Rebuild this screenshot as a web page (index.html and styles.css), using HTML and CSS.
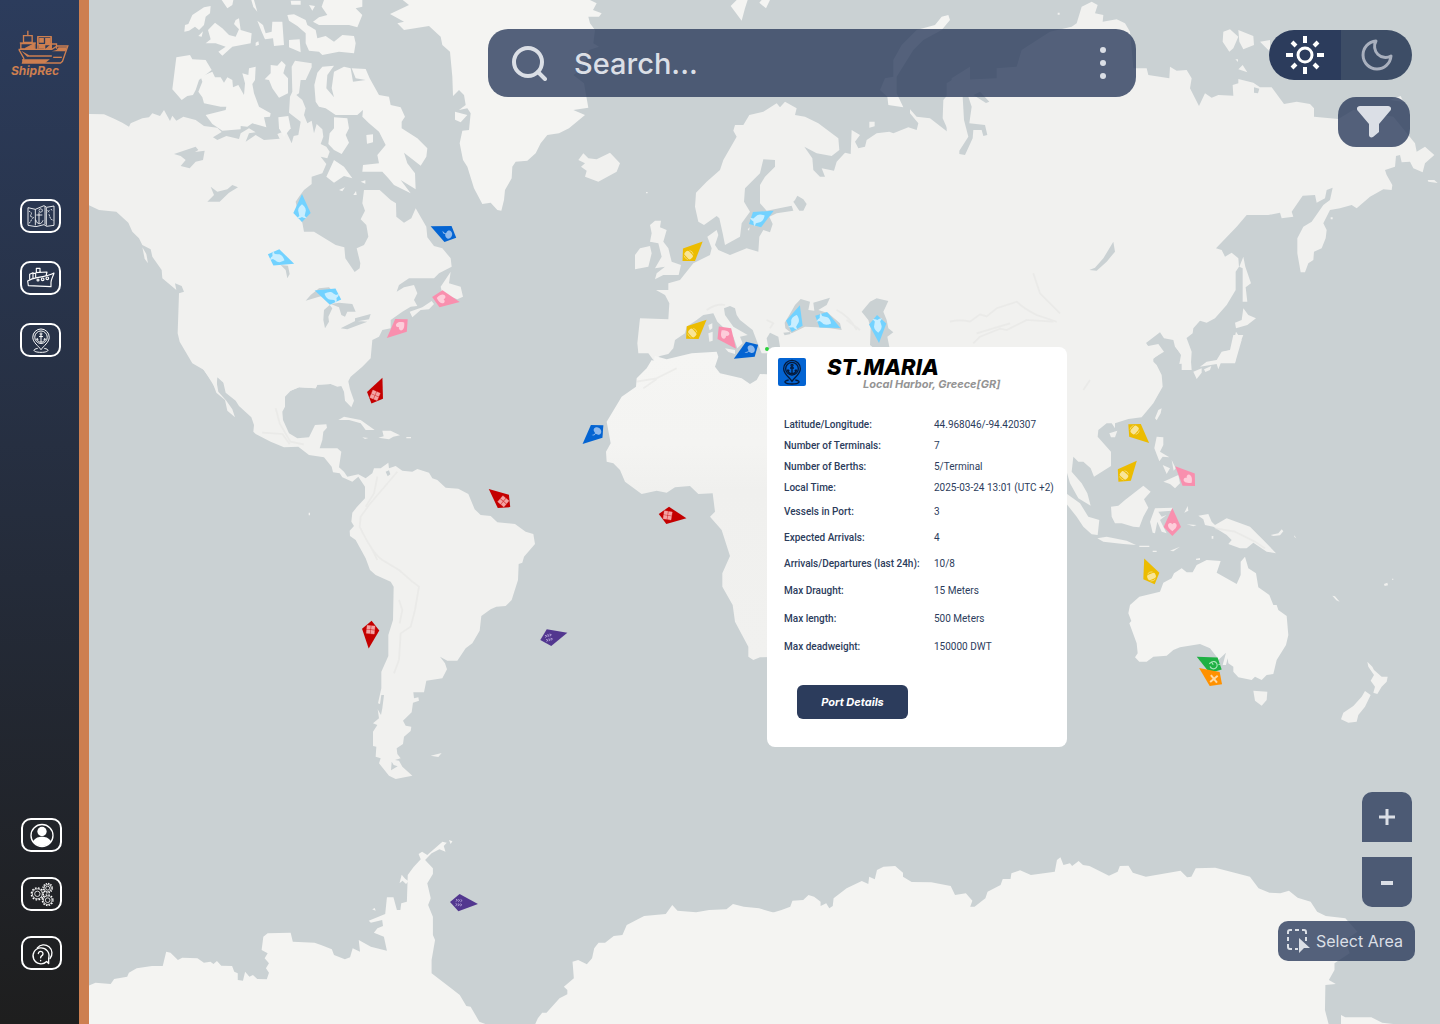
FILE: index.html
```html
<!DOCTYPE html>
<html lang="en">
<head>
<meta charset="utf-8">
<title>ShipRec</title>
<link rel="stylesheet" href="styles.css">
</head>
<body>
<div class="app">
  <aside class="sidebar">
    <a class="brand" href="#" aria-label="ShipRec home">
      <svg class="brand-ship" viewBox="0 0 150 102" fill="none" stroke="currentColor" stroke-width="4">
        <path d="M28 2v14"/><path d="M15 17h26v20H15z"/><path d="M4 39h48"/><path d="M7 41h42v16H7z"/>
        <path d="M58 20h40v24H58z"/><path d="M62 24h14v14H62zM80 24h16v20H80zM60 44h20v12H60z" fill="currentColor" stroke="none"/>
        <path d="M58 22v36M78 42v16M98 22v36M80 42h34v14"/>
        <path d="M84 56l14-12v14zM20 56l26-14v14z" fill="currentColor"/>
        <path d="M2 58h98l16-10h32l-16 46-6 5H12l4-14L2 60z"/>
        <path d="M10 88h84l-14 11H14zM8 62l24 14h68v4H26zM120 52h26l-5 12H100l14-4z" fill="currentColor" stroke="none"/>
        <path d="M104 82h26"/>
      </svg>
      <span class="brand-name">ShipRec</span>
    </a>
    <nav class="nav nav-main" aria-label="Main">
      <button class="nav-btn" type="button" aria-label="Map">
        <svg viewBox="0 0 84 66" class="i-wide" fill="none" stroke="currentColor" stroke-width="2.6">
          <path d="M3 8l22 5 26-11 8 5 22-4v58l-22 3-8-5-24 6-24-4z"/><path d="M25 13v48M54 4v54M58 8v54"/>
          <path d="M36 16a5 5 0 1 1 0 1M36 22v34M28 30h18M26 44c2 10 8 12 12 12s8-4 10-10" />
          <path d="M6 18l8 6-4 10 10 4M6 54c8-2 4-12 14-16M62 16l5 6M67 16l-5 6M66 28l5 14 8 4M72 12l4 6" stroke-dasharray="5 2"/>
        </svg>
      </button>
      <button class="nav-btn" type="button" aria-label="Vessels">
        <svg viewBox="0 0 84 66" class="i-wide" fill="none" stroke="currentColor" stroke-width="3.4" stroke-linejoin="round">
          <path d="M2 42c10-6 16-8 28-10 20-3 38-6 51-14-2 8-9 20-9 28v13L4 56z"/><path d="M8 38V22l10-5v17M18 19h8v13M26 17l34-2-3 12M28 16V4h11v11"/>
          <circle cx="33" cy="39" r="3"/><circle cx="47" cy="37" r="4"/><circle cx="61" cy="34" r="4"/>
        </svg>
      </button>
      <button class="nav-btn" type="button" aria-label="Ports">
        <svg viewBox="0 0 60 76" class="i-tall" fill="none" stroke="currentColor" stroke-width="3"><use href="#port"/></svg>
      </button>
    </nav>
    <nav class="nav nav-foot" aria-label="Account">
      <button class="nav-btn" type="button" aria-label="Profile">
        <svg viewBox="0 0 72 72" class="i-tall">
          <circle cx="36" cy="36" r="33" fill="none" stroke="currentColor" stroke-width="4"/><circle cx="36" cy="24" r="14" fill="currentColor"/>
          <path d="M9 54c8-12 17-14 27-14s19 2 27 14c-6 9-17 14-27 14S15 63 9 54z" fill="currentColor"/>
        </svg>
      </button>
      <button class="nav-btn" type="button" aria-label="Settings">
        <svg viewBox="0 0 72 72" class="i-tall" fill="none" stroke="currentColor" stroke-width="2.4">
          <circle cx="22" cy="34" r="15"/><circle cx="22" cy="34" r="18" stroke-dasharray="5 4.4" stroke-width="4"/><circle cx="22" cy="34" r="8"/>
          <circle cx="53" cy="17" r="11"/><circle cx="53" cy="17" r="14" stroke-dasharray="4 3.3" stroke-width="4"/><circle cx="53" cy="17" r="6"/>
          <circle cx="53" cy="53" r="13"/><circle cx="53" cy="53" r="16" stroke-dasharray="4.6 3.8" stroke-width="4"/><circle cx="53" cy="53" r="7"/>
        </svg>
      </button>
      <button class="nav-btn" type="button" aria-label="Help">
        <svg viewBox="0 0 72 72" class="i-tall" fill="none" stroke="currentColor" stroke-width="4" stroke-linecap="round" stroke-linejoin="round">
          <path d="M50 60a24 24 0 1 1 6-10v16z"/><path d="M22 19a20 20 0 1 1 38 32"/>
          <path d="M25 36a7 7 0 1 1 10 7c-3 2-3 3-3 6M32 57v1"/>
        </svg>
      </button>
    </nav>
  </aside>

  <main class="stage">
    <svg class="map" viewBox="267 0 4053 3072" preserveAspectRatio="xMidYMid slice" aria-label="World map">
      <defs>
        <linearGradient id="desert" x1="0" y1="0" x2="0" y2="1"><stop offset="0" stop-color="#f5f5f3"/><stop offset=".3" stop-color="#f4f4f2"/><stop offset=".45" stop-color="#f0f0ee"/><stop offset="1" stop-color="#f1f1ef"/></linearGradient>
        <g id="port">
          <path d="M30 66C22 54 5 44 5 28a25 25 0 0 1 50 0c0 16-17 26-25 38z"/><circle cx="30" cy="28" r="19"/>
          <circle cx="30" cy="18" r="3"/><path d="M30 21v22M24 26h12M18 33c1 7 6 10 12 10s11-3 12-10M15 36l3-4 4 3M38 35l4-3 3 4"/>
          <path d="M20 62c-18 3-14 12 10 12s28-9 10-12"/>
        </g>
        <path id="kite" d="M0-57L26 0 0 27-26 0z"/>
        <g id="fish"><use href="#kite" fill="#72d2ff"/><path d="M0-26c10 8 14 16 10 25L8 8l7 8-9-1-6-3-6 3-9 1 7-8-2-9c-4-9 0-17 10-25z" fill="#c9eeff"/></g>
        <g id="whale"><use href="#kite" fill="#0464d2"/><path d="M2-19c-6 3-8 7-5 11-8 3-11 8-10 13 2 9 18 11 23 2 4-7 0-13-7-13-4 0-7-3-1-13z" fill="#8fb9ec"/></g>
        <g id="heart"><use href="#kite" fill="#f98fae"/><path d="M0 13C-9 6-13 1-13-5c0-8 9-10 13-3 4-7 13-5 13 3 0 6-4 11-13 18z" fill="#fdcdda"/></g>
        <g id="cargo"><use href="#kite" fill="#c40000"/><path d="M-12-12h11v11h-11zM1-12h11V-1H1zM-12 1h11v11h-11zM1 1h11v11H1z" fill="#f3a3a3" stroke="#f3a3a3" stroke-width="1"/></g>
        <g id="barrel"><use href="#kite" fill="#ecbc00"/><rect x="-13" y="-7" width="26" height="17" rx="6" fill="#f9e596"/><path d="M-8-10q8-5 16 0M-8 13q8 4 16 0" fill="none" stroke="#f9e596" stroke-width="2"/></g>
        <g id="tug"><use href="#kite" fill="#52378f"/><path d="M-10-10l5 3-5 4M-3-10l5 3-5 4M4-10l5 3-5 4M-10 3l5 3-5 4M-3 3l5 3-5 4M4 3l5 3-5 4" transform="rotate(-90)" fill="none" stroke="#b9aadb" stroke-width="2.4"/></g>
      </defs>
      <g class="land">
        <!-- North America and the Arctic islands -->
        <g transform="translate(267 0)">
          <path d="M-5 342L45 343 77 357 100 368 120 380 125 370 160 355 180 352 190 340 213 348 225 330 243 363 250 347 262 362 283 350 320 360 345 378 385 383 398 396 372 412 385 420 412 408 450 417 455 400 480 385 500 397 480 400 470 425 500 405 525 420 572 416 565 402 590 392 608 430 614 408 628 405 635 365 600 338 603 290 610 275 608 200 618 182 668 190 668 202 650 240 635 240 630 280 622 285 640 300 650 325 645 345 655 370 668 362 675 400 683 372 700 388 703 410 695 432 712 440 722 455 715 475 695 470 712 492 700 520 668 530 668 552 645 570 630 590 620 605 630 650 640 668 645 695 675 695 740 735 766 742 769 775 797 816 812 805 814 790 803 745 825 735 838 710 832 675 815 658 828 632 820 610 825 570 872 570 905 600 921 610 922 650 945 668 967 655 980 625 1012 680 1015 712 1035 738 1060 745 1085 775 1088 800 1050 820 1035 835 960 835 930 855 923 875 945 862 975 855 985 880 975 900 985 918 965 920 940 935 905 960 905 985 880 990 870 1010 850 1020 845 1075 820 1100 785 1130 777 1145 765 1160 745 1155 725 1152 685 1154 680 1165 630 1162 605 1172 420 1160 400 1145 385 1132 382 1170 370 1150 345 1110 310 1090 272 1025 266 1000 270 880 285 875 278 858 258 850 262 870 220 835 218 810 190 770 185 748 160 735 150 715 130 695 118 668 82 635 30 630-5 613z"/>
          <path d="M160 742l12 20 5 28-10-14z"/>
          <g class="ice">
            <path d="M262 172L303 165 310 178 350 180 368 210 330 240 320 270 312 285 295 288 278 300 250 268z"/>
            <path d="M335 230L370 215 378 232 395 232 405 248 415 232 430 240 432 262 448 255 465 285 468 250 460 220 478 225 480 205 500 200 498 240 490 252 495 280 510 320 545 340 543 350 525 352 532 382 490 370 475 380 455 378 455 388 400 392 370 372 350 345 410 330 412 320 395 320 345 310 340 292 328 275 340 245z"/>
            <path d="M286 95L288 75 298 72 310 45 345 22 365 18 363 40 350 50 345 75 330 90 318 80 300 92zM328 108l14-14-4 16z"/>
            <path d="M357 90L378 68 400 85 420 105 440 110 450 88 435 72 440 60 450 55 455 90 488 100 485 130 430 140 400 167 388 155 410 140 380 130 350 130 365 118z"/>
            <path d="M505 62L522 75 530 100 548 95 550 65 580 65 585 135 555 138 552 115 528 118 518 95zM500 128l8-4 2 10-10 4z"/>
            <path d="M595 45L615 43 650 60 655 75 680 90 685 115 710 108 735 125 760 105 795 108 800 130 795 160 750 155 700 165 690 155 660 152 650 130 650 100 625 78 600 62z"/>
            <path d="M672 65L690 52 715 45 698 20 705 0H820L820 20 800 25 820 45 805 82 780 75 690 75z"/>
            <path d="M600 120L632 118 635 157 600 142zM398 0h35l-3 15-15 10zM487 0h8l10 35-12-14zM605 2h30v12h-28zM660 15l18 3-8 14z"/>
            <path d="M545 195L565 197 578 183 590 195 583 220 597 235 597 280 570 293 550 265 540 240 527 238 545 220z"/>
            <path d="M568 352L598 348 605 385 585 410 570 385z"/>
            <path d="M680 305L676 255 685 218 700 200 735 197 715 225 712 265 735 292 728 265 735 215 765 200 785 205 792 245 830 240 800 235 788 205 830 207 842 235 870 285 900 290 905 315 935 322 948 350 938 365 938 385 985 415 1015 445 1012 470 995 497 945 458 955 490 978 520 980 568 935 540 965 580 915 555 898 535 880 515 820 515 822 495 870 490 865 465 890 435 870 395 840 370 820 350 822 330 805 345 740 345 710 325 690 320z"/>
            <path d="M735 352L775 355 780 385 770 405 780 428 758 462 735 450 718 432 722 400 735 385zM832 405l20-2v24l-18 4z"/>
            <path d="M735 480L765 500 790 535 765 528 735 548 712 530zM750 570l18-8-8 12zM793 585l8-12 2 12zM815 545l14-4v10z"/>
          </g>
          <path d="M1085 815L1080 850 1115 860 1122 890 1105 898 1060 880 1055 860zM962 935L1000 922 1028 903 1035 912 1020 928 995 930 970 952z"/>
          <path class="ice" d="M1493-5L1523 10 1512 30 1538 40 1530 50 1498 50 1503 70 1518 90 1513 130 1530 140 1500 150 1483 205 1453 225 1485 250 1498 323 1453 330 1488 345 1440 385 1410 400 1375 405 1355 430 1340 460 1315 482 1280 485 1270 500 1268 535 1248 570 1245 600 1237 632 1225 630 1205 608 1180 612 1155 565 1135 500 1122 480 1112 430 1120 392 1140 390 1145 340 1135 325 1110 330 1130 315 1125 285 1110 270 1092 288 1090 230 1083 155 1060 135 1055 110 1020 78 945 90 925 70 945 65 903 42 960 15 935-5zM1098 335l37 10-20 22-17-8z"/>
        </g>
        <!-- Central and South America -->
        <g transform="translate(267 1140)">
          <path d="M340-35L370 5 382 38 408 60 415 92 438 112 430 88 412 62 388 35 380-10 400-5 410 38 440 62 450 78 487 112 495 135 493 155 500 162 545 185 585 202 628 200 660 225 705 232 728 260 732 277 752 280 760 292 790 305 808 290 828 320 828 355 803 382 790 398 787 425 795 438 782 452 783 468 800 480 830 535 843 570 860 585 905 605 914 620 912 720 898 765 898 828 877 875 877 925 867 970 873 972 877 945 885 945 880 985 876 1005 866 988 870 1015 852 1030 865 1035 852 1055 852 1098 862 1100 860 1130 875 1135 870 1150 882 1165 900 1187 920 1197 970 1187 940 1160 930 1142 918 1140 935 1135 925 1122 923 1105 942 1092 945 1070 965 1053 967 1040 950 1037 942 1022 968 997 972 968 990 962 988 952 975 955 973 937 1005 937 1012 902 1060 895 1074 868 1068 850 1053 830 1075 842 1105 842 1130 805 1150 790 1172 752 1177 708 1205 688 1222 680 1250 678 1268 660 1287 600 1289 552 1300 548 1305 530 1338 492 1333 462 1310 455 1278 432 1225 427 1205 408 1175 405 1157 388 1138 342 1108 326 1070 323 1045 300 1030 295 1020 278 985 267 970 275 940 272 920 258 900 265 898 248 875 265 855 265 850 280 830 295 808 283 775 290 765 275 750 262 757 215 745 205 692 205 700 180 703 155 714 143 712 133 678 135 660 172 625 175 600 160 582 120 580 95 588 80 588 50 605 32 630 22 680 25 685 14 725 12 745 20 757 18 765 35 768 62 787 82 795 62 783 28 777 0V-35z"/>
          <path d="M748 120L765 110 815 120 857 150 830 150 815 130 780 120zM880 152l25 0 28 14-20 4-13 8-32-5 16-4zM820 172l18 2-10 3zM952 171h14v4h-14zM1025 1127l33-8-10 12zM1305 1168l18 14zM659 398h4v8h-4z"/>
          <path class="water" d="M890 275l10-4 4 12-8 6zM908 1145l6 10 12 4-20 12z"/>
          <path class="relief" d="M560 85q8 30 12 45l32 55 40 8M520 158l60 4 22 30M925 275Q870 340 840 375L815 410 812 440Q850 520 880 540L930 570 970 605 990 620 978 690 965 740 935 760 930 840 915 880M865 290L855 340 830 380M930 660l10 30-8 40M845 500l20 40"/>
        </g>
        <!-- Europe, Scandinavia, western Russia -->
        <g transform="translate(1440 0)">
          <path d="M760 392L765 375 790 375 808 345 850 335 890 310 900 322 915 305 950 325 945 345 975 350 1015 370 1075 415 1078 450 1055 468 1010 460 973 440 997 475 1000 510 1020 530 1035 530 1025 505 1062 512 1070 485 1095 458 1112 462 1115 390 1140 405 1125 425 1135 445 1155 440 1160 420 1190 400 1228 395 1240 400 1285 382 1310 390 1315 370 1290 340 1290 328 1310 350 1350 355 1408 400 1388 355 1390 300 1415 270 1415 235 1470 200V1085H905L885 1060 900 1040 895 1010 870 998 860 1015 868 1060 845 1060 835 1035 818 990 780 960 770 945 765 925 750 918 732 925 735 945 760 980 803 1005 780 1010 788 1030 772 1045 760 1010 712 965 700 940 670 945 650 960 620 980 615 1000 585 1020 580 1045 565 1062 540 1068 520 1080 505 1060 475 1060 472 1030 480 955 565 958 568 910 555 885 528 870 565 870 565 850 600 840 640 790 690 765 695 745 682 710 710 690 715 705 705 735 715 750 750 765 800 745 835 755 838 710 850 690 870 697 878 672 868 650 890 640 940 632 935 617 860 632 840 610 840 555 855 530 885 500 885 480 850 478 840 520 795 565 792 605 810 635 785 670 780 710 735 735 728 700 718 655 710 648 672 675 655 665 645 620 648 578 680 545 720 510 730 480 770 410z"/>
          <path d="M295 480L310 460 325 475 350 478 390 458 420 490 410 515 355 545 315 530 320 512 303 500 315 490zM510 675L525 662 543 662 540 682 560 690 550 725 565 745 575 785 603 795 596 825 550 825 525 838 530 820 555 800 525 805 545 770 535 730 510 725 515 700zM480 745L510 738 515 760 505 800 465 808 465 765zM685 975l12-5v15l-8 6zM685 1000l13-5v27l-10 3zM735 1045l30 5v12l-20-6zM1168 365l16 0v14l-16 4zM498 576h5v4h-5zM803 688l6-6-2 10z"/>
          <path class="ice" d="M752 18L770 0H803L795 25 785 62 765 35zM838 8L845 0H870L858 25zM1405 45L1410 60 1385 90 1330 120 1300 150 1250 230 1250 280 1270 322 1225 315 1222 290 1200 270 1215 235 1240 230 1240 180 1265 135 1310 90 1365 75 1385 50z"/>
          <path class="water" d="M945 600L952 587 970 598 980 612 970 632 958 632 940 605zM962 897L945 915 928 945 914 968 916 985 935 1000 975 980 1010 982 1050 985 1085 990 1080 970 1045 940 1015 930 1040 915 1050 893 1000 908 1003 932 985 930 990 905zM1145 935L1170 905 1190 895 1225 903 1210 935 1220 960 1225 985 1240 997 1222 1010 1230 1050 1195 1055 1170 1035 1172 985 1165 960zM910 998l20-2 2 6-18 4zM1422 452h20v9z"/>
          <path class="relief" d="M680 930q30-20 55-15M860 960l20 10-10 15M1070 930q40 20 60 60M1100 960l40 30"/>
        </g>
        <!-- Siberia and the far east -->
        <g transform="translate(2880 0)">
          <path d="M-40 250L-20 238-5 250 0 240 110 235V205L170 200 185 150 270 95 335 80 350 70 365 20 395 5 413 15 405 40 430 45 428 65 470 58 495 70 510 95 520 205 560 205 565 225 628 235 630 200 650 212 680 210 695 235 690 265 717 318 735 280 755 293 775 285 820 287 818 255 835 250 835 237 880 248 900 262 935 262 972 312 1010 305 1050 312 1062 325 1062 350 1135 357 1180 330 1300 350 1365 430 1370 455 1395 440 1423 465 1395 490 1388 517 1360 505 1350 485 1325 487 1320 465 1308 468 1305 500 1275 510 1280 525 1297 555 1295 570 1270 568 1230 590 1190 625 1175 615 1140 625 1110 630 1090 670 1100 690 1097 715 1085 745 1062 755 1060 780 1045 790 1035 817 1022 817 1012 760 1012 715 1030 680 1055 665 1090 615 1110 600 1118 563 1100 570 1095 595 1070 608 1065 585 1028 587 995 635 1000 650 965 655 960 638 925 645 860 645 830 680 768 745 785 750 795 770 815 758 835 775 837 800 827 815 827 870 800 915 765 955 740 968 720 962 700 985 698 1000 675 1018 690 1045 695 1110H665V1065L645 1040 640 1020 612 1015 600 997 557 1030 565 1038 595 1032 612 1055 580 1075V1130H-40z"/>
          <path d="M790 95L810 88 835 110 820 145 808 155 788 125zM835 90L880 108 882 135 850 148 838 125zM900 125L930 120V155L915 140zM826 178h8v8zM835 208L848 195 862 217zM1290 300L1322 288 1330 305zM1403 540l20 0 10 9-28-4zM850 770L856 800 873 850 857 862 862 905 848 905 848 805 838 800zM850 925L865 945 888 955 862 975 828 985 825 968 845 960zM828 995L845 1020 825 1090H775L790 1055 815 1050zM1112 652h6v6h-6zM293 38h6v6h-6z"/>
          <path class="water" d="M8 290H25L35 320 28 370 75 375 82 405 70 408 65 390 40 390 38 415 15 465-2 462V452L25 410 12 360zM40 285l20-10 28 30-10 4zM460 725L465 755 440 785 410 812 388 810 405 803 430 775zM882 262l16 4-4 14-12-2z"/>
          <path class="relief" d="M-30 965q30-8 60 0l30-22 20 6 30-24 60-20q20 20 60 40l60 20M40 1030l20-20 60-24 20 4 60-30 80 5M220 820l20 60 60 60M50 1000l100-30M310 1015l70 30"/>
        </g>
        <!-- Africa -->
        <g transform="translate(1680 900)">
          <path fill="url(#desert)" d="M280 182L285 168 320 178 395 160 470 155 475 170 465 200 480 220 545 235 570 252 590 240 600 222 660 225V1070L600 1072 580 1080 565 1070 565 1040 525 965 518 915 487 860 487 820 510 768 485 690 450 650 465 635 458 580 415 582 390 558 345 562 320 578 290 572 245 582 195 545 180 510 160 490 140 485 138 455 152 430 140 365 185 290 228 260 230 235 260 205 275 180z"/>
          <path class="relief" d="M230 245l60-10 60-30M250 265l40-28"/>
        </g>
        <!-- China, south-east Asia, Oceania -->
        <g transform="translate(3000 1020)">
          <path d="M150-30H460L437 5 445 25 490 33 455 60 470 75 485 105 488 140 460 190 425 232 385 237 345 250 345 265 335 250 320 250 295 270 293 290 333 335 333 378 282 410 272 385 250 365 235 365 220 350 215 395 245 430 262 460 272 497 235 475 210 430 200 395H150zM523-20L530 25 543 45 538 72 573 68 575 35 560-5z"/>
          <path d="M700-15L690 30 665 35 650 60 620 65 600 80 650 72 655 88 665 62 705 68 712 30 730-15zM580 95L605 85V98L590 117zM612 88l22-10-4 12-14 6zM465 235L475 210 485 205 482 220 470 241zM328 280L352 272 345 292 333 292z"/>
          <path d="M470 290L490 292V315L480 335 508 352 488 350 478 364 463 325zM488 375L510 385 500 402zM490 425L535 405 540 430 525 445 510 432zM515 360L527 385 521 392zM333 500L355 497 375 480 430 437 452 455 432 478 445 503 430 530 418 562 400 560 365 550 345 550 335 530zM198 460L240 490 265 530 298 540 293 585 275 583 250 560 230 530 198 490zM292 595L320 590 380 602 408 615 370 612 310 605zM465 505L518 503 515 512 475 515 485 530 500 525 480 540 500 580 485 575 472 545 465 580 458 578 450 545zM418 617h30v4h-30zM458 632h12v4h-12zM510 632l30-12-20 14zM553 518l10-20 2 14zM560 553l30 2-10 4zM635 588h5v8h-5z"/>
          <path d="M595 527L625 522 635 545 645 555 680 535 750 560 795 605 828 640 800 635 760 608 740 625 720 625 685 612 695 600 680 585 640 560 615 555 610 538zM812 585L835 580 845 568 850 574 840 586 820 588zM997 767l8 2 14 16-10-4zM1152 732l10-4 2 8-10 2zM1176 716h4v3h-4zM883 586l6 9-6-4zM588 656l12-2v6h-12z"/>
          <path class="ice" d="M385 820L390 795 418 770 480 755 490 728 515 715 522 700 545 685 560 697 578 697 590 675 620 660 662 663 650 698 710 732 722 705 722 665 735 650 745 685 768 700 775 742 808 765 820 795 830 795 835 810 860 828 865 885 858 915 830 960 820 1002 800 1005 785 1020 765 1010 755 1020 715 1012 700 995 700 980 685 970 683 955 678 975 668 975 678 938 655 960 650 950 630 925 600 912 540 922 520 930 500 947 460 950 440 965 418 965 405 952 413 940 410 910 388 850 394 843z"/>
          <path d="M760 1052L802 1055 800 1080 785 1097 765 1082zM1102 965L1117 980 1122 990 1145 1010 1163 1010 1160 1025 1145 1040 1132 1062 1120 1058 1125 1040 1112 1022 1122 1005 1105 980zM1095 1053L1112 1065 1095 1100 1075 1125 1070 1145 1045 1148 1023 1138 1030 1118 1060 1098 1085 1070z"/>
          <path class="relief" d="M250 150l20-30M645 565l60 10 60 30 30 20"/>
        </g>
        <!-- Antarctica -->
        <g class="ice" transform="translate(267 2340) scale(1.301 1)">
          <path d="M-2 618L15 608 50 612 58 597 88 590 92 578 110 565 145 558 170 558 178 515 188 518 205 540 215 533 250 535 265 548 280 545 287 552 295 543 305 557 330 558 335 575 343 580 343 600 355 602 360 575 370 590 378 585 388 597 410 598 415 578 408 565 415 550 405 535 412 520 398 510 402 470 412 460 465 458 470 485 520 488 535 495 560 508 565 525 590 538 602 532 608 505 625 515 622 480 650 500 687 512 680 470 657 458 665 445 678 438 676 420 650 428 645 422 683 402 687 352 702 352 710 390 718 390 720 370 733 365 735 285 748 262 765 238 760 222 768 215 780 225 815 185 825 188 818 198 822 215 808 208 790 220 775 240 793 265 793 282 780 310 788 355 782 375 793 410 793 465 798 480 790 540 790 580 835 625 855 645 870 678 880 680 900 725 920 735-2 735z"/>
          <path d="M830 180l8 4-4 8zM716 310l5-26 8 12 8 8-6 8-8-10zM653 388l6-4 2 8z"/>
          <path d="M1028 735L1035 715 1045 698 1055 698 1085 655 1103 643 1103 630 1095 620 1118 595 1115 545 1128 540 1148 553 1160 535 1165 505 1175 488 1190 488 1210 468 1230 465 1240 435 1280 408 1330 402 1345 375 1357 392 1400 397 1430 390 1470 388 1485 372 1510 380 1545 385 1580 398V735z"/>
          <path transform="translate(1547)" d="M-5 388L25 400 50 390 70 380 75 362 100 360 112 345 125 350 140 365 140 378 153 370 160 385 168 378 170 355 200 325 235 303 250 312 252 290 265 298 270 270 285 260 312 258 330 278 330 290 350 306 395 307 440 318 450 345 475 340 490 362 485 380 495 380 520 355 525 335 555 315 560 297 578 297 580 280 600 271 625 285 680 275 685 240 693 232 700 255 715 250 720 258 735 243 745 255 760 258 805 287 825 275 830 258 850 257 860 278 890 290 970 272 985 292 995 290 1005 265 1050 263 1130 290 1150 325 1175 338 1200 340 1220 332 1240 353 1270 365 1285 395 1305 408 1350 415 1378 455 1350 480 1360 520 1325 550 1325 570 1312 600 1328 612 1304 615 1303 690 1312 735H-5zM1340 705L1350 712 1410 712 1435 728 1480 735H1340z"/>
        </g>
      </g>
      <g class="water" transform="translate(267 0)">
        <path d="M255 462L320 440 328 450 318 456 347 452 342 480 320 485 302 505 275 498 290 480 275 468zM365 560L385 575 415 568 430 555 447 562 420 578 392 605 355 605 375 585zM575 795L597 797 602 822 595 835 590 810zM650 902L665 885 690 865 720 862 738 880 690 890zM705 930L722 915 730 925 718 950 720 965 708 985 703 960zM725 912L750 908 790 912 800 935 775 935 768 950 757 945 750 922zM755 985L800 962 835 965 775 988zM798 955L845 942 840 958 798 965z"/>
      </g>
      <g class="vessels">
        <use href="#fish" transform="translate(906 639)"/>
        <use href="#fish" transform="translate(829 772) rotate(110)"/>
        <use href="#fish" transform="translate(998 890) rotate(289)"/>
        <use href="#fish" transform="translate(2271 659) rotate(62)"/>
        <use href="#fish" transform="translate(2383 970) rotate(17)"/>
        <use href="#fish" transform="translate(2470 959) rotate(116)"/>
        <use href="#fish" transform="translate(2633 972) rotate(176)"/>
        <use href="#whale" transform="translate(1344 702) rotate(294)"/>
        <use href="#whale" transform="translate(2251 1048) rotate(240)"/>
        <use href="#whale" transform="translate(1790 1294) rotate(228)"/>
        <use href="#heart" transform="translate(1323 896) rotate(100)"/>
        <use href="#heart" transform="translate(1203 976) rotate(228)"/>
        <use href="#heart" transform="translate(2173 1001) rotate(142)"/>
        <use href="#heart" transform="translate(3566 1439) rotate(315)"/>
        <use href="#heart" transform="translate(3517 1581)"/>
        <use href="#cargo" transform="translate(1125 1186) rotate(23)"/>
        <use href="#cargo" transform="translate(1510 1504) rotate(310)"/>
        <use href="#cargo" transform="translate(1112 1889) rotate(186)"/>
        <use href="#cargo" transform="translate(2003 1546) rotate(99)"/>
        <use href="#barrel" transform="translate(2067 764) rotate(46)"/>
        <use href="#barrel" transform="translate(2078 998) rotate(47)"/>
        <use href="#barrel" transform="translate(3405 1291) rotate(132)"/>
        <use href="#barrel" transform="translate(3373 1425) rotate(41)"/>
        <use href="#barrel" transform="translate(3454 1728) rotate(-22)"/>
        <use href="#tug" transform="translate(1647 1913) rotate(75)"/>
        <use href="#tug" transform="translate(1377 2708) rotate(94)"/>
        <g transform="translate(3641 1996) rotate(-63)"><use href="#kite" fill="#1eb043"/><path d="M-8-8a11 11 0 1 0 14-2M-2-14l8 4-5 8M8 12l5 5" fill="none" stroke="#a9e6b8" stroke-width="3.4"/></g>
        <g transform="translate(3644 2037) rotate(-55)"><use href="#kite" fill="#ff9100"/><path d="M-15-6L13 2M3-16L-5 12" fill="none" stroke="#ffd9a3" stroke-width="6"/></g>
        <circle cx="2301" cy="1047" r="6" fill="#2bd13b"/>
      </g>
    </svg>

    <form class="search" role="search">
      <svg class="search-icon" viewBox="0 0 36 36" fill="none" stroke="currentColor" stroke-width="4" stroke-linecap="round"><circle cx="17" cy="17" r="14"/><path d="M27 27l7 7"/></svg>
      <input class="search-input" type="search" placeholder="Search..." aria-label="Search">
      <button class="search-more" type="button" aria-label="More options">
        <svg viewBox="0 0 8 34" fill="currentColor"><circle cx="4" cy="4" r="3"/><circle cx="4" cy="17" r="3"/><circle cx="4" cy="30" r="3"/></svg>
      </button>
    </form>

    <div class="top-tools">
      <div class="theme" role="radiogroup" aria-label="Theme">
        <label class="theme-opt light"><input type="radio" name="theme" aria-label="Light" checked>
          <svg viewBox="0 0 38 38" fill="none" stroke="currentColor" stroke-width="4"><circle cx="19" cy="19" r="7" stroke-width="3"/><path d="M19 0v7M19 31v7M0 19h7M31 19h7M6 6l4 4M28 28l4 4M6 32l4-4M28 10l4-4"/></svg>
        </label>
        <label class="theme-opt dark"><input type="radio" name="theme" aria-label="Dark">
          <svg viewBox="0 0 38 38" fill="none" stroke="currentColor" stroke-width="3" stroke-linejoin="round"><path d="M18 5A14 14 0 1 0 33 20 11 11 0 0 1 18 5z"/></svg>
        </label>
      </div>
      <button class="filter" type="button" aria-label="Filter">
        <svg viewBox="0 0 34 32" fill="currentColor"><path d="M3 0h28c3 0 4 3 2 5L22 18v8l-6 5c-2 1-4 0-4-2V18L1 5c-2-2-1-5 2-5z"/></svg>
      </button>
    </div>

    <article class="popup">
      <header class="popup-head">
        <span class="port-badge"><svg viewBox="0 0 60 76" fill="none" stroke="currentColor" stroke-width="4"><use href="#port"/></svg></span>
        <div class="popup-titles"><h1>ST.MARIA</h1><p>Local Harbor, Greece[GR]</p></div>
      </header>
      <table class="facts">
        <tbody class="tight">
          <tr><th scope="row">Latitude/Longitude:</th><td>44.968046/-94.420307</td></tr>
          <tr><th scope="row">Number of Terminals:</th><td>7</td></tr>
          <tr><th scope="row">Number of Berths:</th><td>5/Terminal</td></tr>
          <tr><th scope="row">Local Time:</th><td>2025-03-24 13:01 (UTC +2)</td></tr>
        </tbody>
        <tbody class="normal">
          <tr><th scope="row">Vessels in Port:</th><td>3</td></tr>
          <tr><th scope="row">Expected Arrivals:</th><td>4</td></tr>
          <tr><th scope="row">Arrivals/Departures (last 24h):</th><td>10/8</td></tr>
        </tbody>
        <tbody class="loose">
          <tr><th scope="row">Max Draught:</th><td>15 Meters</td></tr>
          <tr><th scope="row">Max length:</th><td>500 Meters</td></tr>
          <tr><th scope="row">Max deadweight:</th><td>150000 DWT</td></tr>
        </tbody>
      </table>
      <button class="details" type="button">Port Details</button>
    </article>

    <div class="map-tools">
      <div class="zoom">
        <button class="zoom-in" type="button" aria-label="Zoom in"><svg viewBox="0 0 16 16" stroke="currentColor" stroke-width="3"><path d="M8 0v16M0 8h16"/></svg></button>
        <button class="zoom-out" type="button" aria-label="Zoom out"><svg viewBox="0 0 16 16" stroke="currentColor" stroke-width="4"><path d="M2 9h12"/></svg></button>
      </div>
      <button class="select-area" type="button">
        <svg viewBox="0 0 24 24" fill="none" stroke="currentColor" stroke-width="2"><path d="M1 5V3q0-2 2-2h2M8 1h4M15 1h2q2 0 2 2v2M1 8v4M1 15v3q0 2 2 2h2M8 20h3M19 8v4"/><path d="M12 9l11 10h-6l-5 5z" fill="currentColor" stroke="none"/></svg>
        Select Area
      </button>
    </div>
  </main>
</div>
</body>
</html>
```
FILE: styles.css
```css
:root {
  --navy: #2c3c5c;
  --glass: rgba(44, 60, 92, .8);
  --copper: #cd7f50;
  --soft: #dbdfe6;
  --sea: #cad1d3;
}
* { box-sizing: border-box; }
body { margin: 0; font-family: Inter, "Work Sans", sans-serif; }
button { border: 0; padding: 0; font: inherit; color: inherit; cursor: pointer; }
svg { display: block; }

.app { display: flex; min-height: 100vh; }

.sidebar {
  flex: none;
  width: 89px;
  display: flex;
  flex-direction: column;
  padding: 30px 0 54px;
  border-right: 10px solid var(--copper);
  background: linear-gradient(var(--navy), #1e1e1e) padding-box;
  color: #fff;
}
.brand { width: 60px; margin-left: 11px; color: var(--copper); text-decoration: none; }
.brand-ship { width: 51px; height: 34px; margin-left: 7px; }
.brand-name { display: block; font-size: 12px; line-height: 14px; font-weight: 700; font-style: italic; }
.nav { display: flex; flex-direction: column; margin-left: 20px; }
.nav-main { margin-top: 121px; gap: 28px; }
.nav-foot { margin-top: auto; margin-left: 21px; gap: 25px; }
.nav-btn {
  width: 41px;
  height: 34px;
  display: grid;
  place-items: center;
  border: 2px solid #fff;
  border-radius: 10px;
  background: none;
}
.i-wide { width: 28px; height: 22px; }
.i-tall { width: 24px; height: 25px; }

.stage { position: relative; flex: 1; min-width: 0; overflow: hidden; background: var(--sea); }
.map { position: absolute; inset: 0; width: 100%; height: 100%; }
.land { fill: #f1f1ef; }
.ice { fill: #f4f4f2; }
.water { fill: var(--sea); }
.relief { fill: none; stroke: #e4e4e2; stroke-width: 5; stroke-linejoin: round; opacity: .5; }

.search {
  position: absolute;
  top: 29px;
  left: 399px;
  right: 304px;
  height: 68px;
  display: flex;
  align-items: center;
  padding: 0 29px 0 23px;
  border-radius: 20px;
  background: var(--glass);
  color: var(--soft);
}
.search-icon { width: 36px; height: 36px; }
.search-input {
  flex: 1;
  min-width: 0;
  height: 48px;
  margin-left: 27px;
  padding: 0;
  border: 0;
  outline: 0;
  background: none;
  color: inherit;
  font: 500 29px Inter, sans-serif;
}
.search-input::placeholder { color: inherit; opacity: 1; }
.search-more { background: none; }
.search-more svg { width: 8px; height: 34px; }

.top-tools {
  position: absolute;
  top: 30px;
  right: 28px;
  display: flex;
  flex-direction: column;
  align-items: flex-end;
  gap: 17px;
}
.theme { display: flex; border-radius: 25px; overflow: hidden; }
.theme-opt { width: 72px; height: 50px; display: grid; place-items: center; cursor: pointer; }
.theme-opt input { position: absolute; opacity: 0; margin: 0; }
.theme-opt svg { width: 38px; height: 38px; }
.light { background: var(--navy); color: #fff; }
.dark { width: 71px; background: #3d4d66; color: #a9b0be; }
.filter {
  width: 72px;
  height: 50px;
  display: grid;
  place-items: center;
  margin-right: 2px;
  border-radius: 18px;
  background: var(--glass);
  color: var(--soft);
}
.filter svg { width: 34px; height: 32px; }

.popup {
  position: absolute;
  top: 347px;
  left: 678px;
  width: 300px;
  padding: 11px 11px 28px;
  border-radius: 8px;
  background: #fff;
  color: var(--navy);
}
.popup-head { display: flex; gap: 21px; height: 56px; }
.port-badge { width: 28px; height: 28px; display: grid; place-items: center; border-radius: 2px; background: #0464d2; color: #061a3a; }
.port-badge svg { width: 20px; height: 26px; }
.popup-titles h1 { margin: 0; color: #000; font-size: 22px; line-height: 19px; font-weight: 800; font-style: italic; }
.popup-titles p { margin: 0 0 0 36px; color: #949494; font-size: 11px; line-height: 14px; font-weight: 700; font-style: italic; }
.facts { width: 100%; margin-left: 6px; border-collapse: collapse; table-layout: fixed; font: 10px Roboto, sans-serif; }
.facts th, .facts td { padding: 0; text-align: left; vertical-align: middle; white-space: nowrap; }
.facts th { width: 150px; font-weight: 500; }
.tight tr { height: 21px; }
.normal tr { height: 26px; }
.loose tr { height: 28px; }
.details {
  display: block;
  width: 111px;
  height: 34px;
  margin: 25px 0 0 19px;
  border-radius: 6px;
  background: var(--navy);
  color: #fff;
  font-size: 11px;
  font-weight: 700;
  font-style: italic;
}

.map-tools {
  position: absolute;
  right: 25px;
  bottom: 63px;
  display: flex;
  flex-direction: column;
  align-items: flex-end;
  gap: 14px;
}
.zoom { display: flex; flex-direction: column; gap: 15px; margin-right: 3px; }
.zoom button { width: 50px; height: 50px; display: grid; place-items: center; background: var(--glass); color: var(--soft); }
.zoom svg { width: 16px; height: 16px; }
.zoom .zoom-in { border-radius: 10px 10px 0 0; }
.zoom .zoom-out { border-radius: 0 0 10px 10px; }
.select-area {
  width: 137px;
  height: 40px;
  display: flex;
  align-items: center;
  gap: 5px;
  padding-left: 9px;
  border-radius: 10px;
  background: var(--glass);
  color: var(--soft);
  font-size: 16px;
  white-space: nowrap;
}
.select-area svg { flex: none; width: 24px; height: 24px; }
```
